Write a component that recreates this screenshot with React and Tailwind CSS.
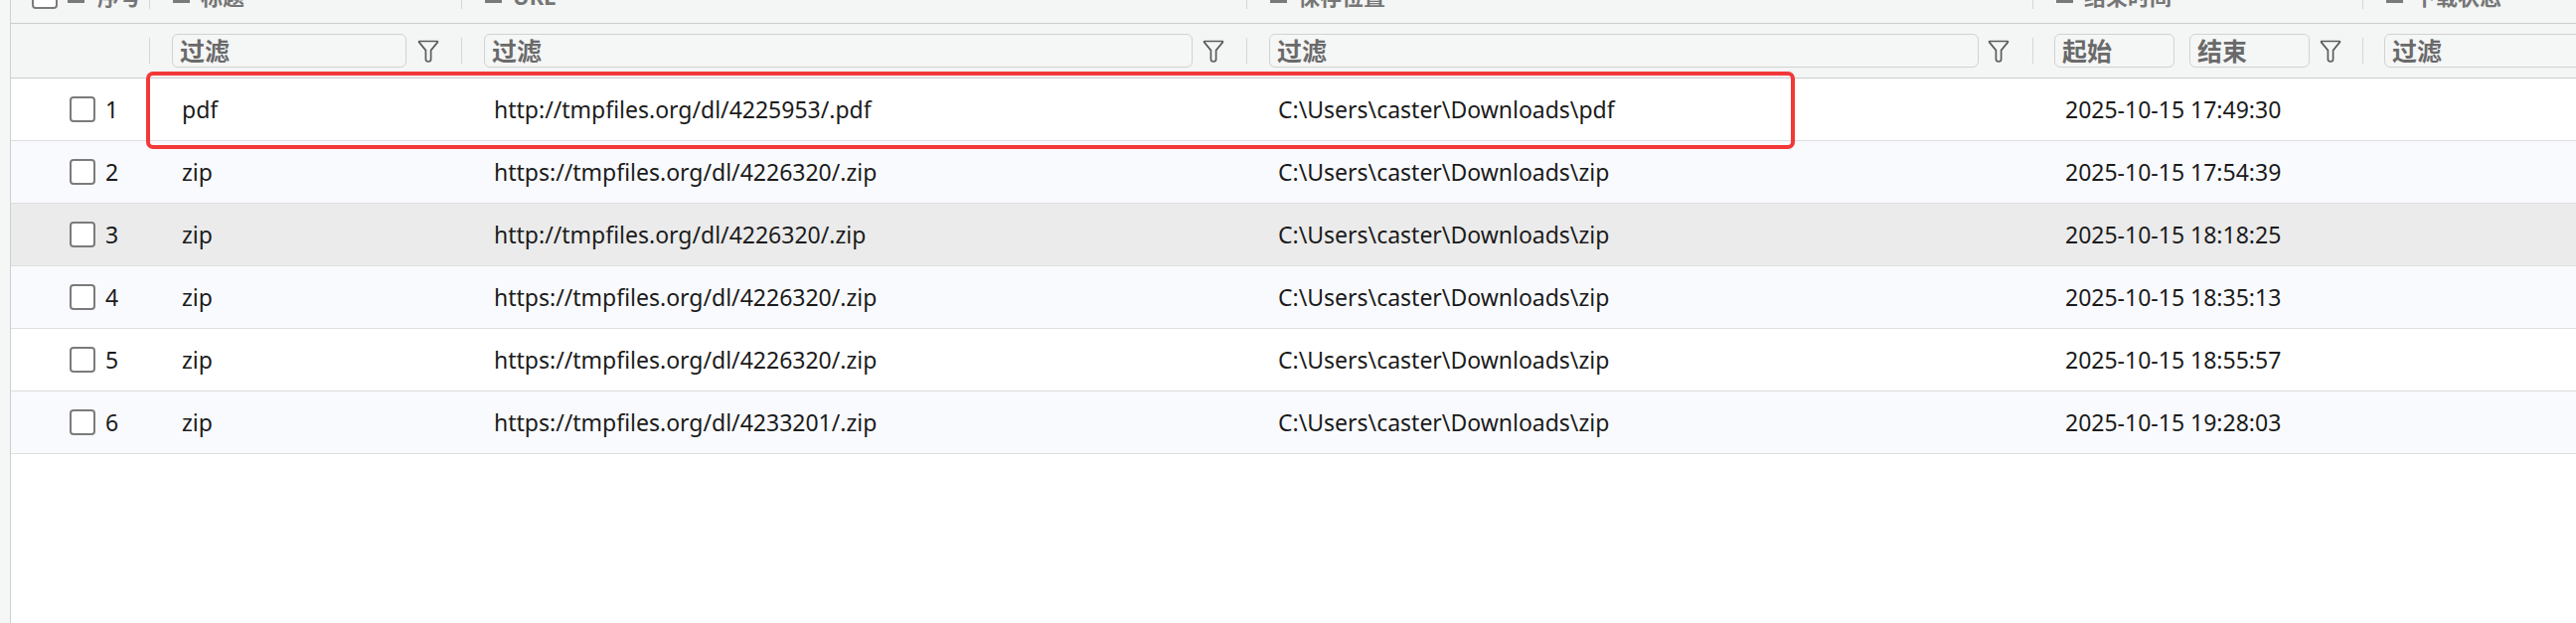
import React from "react";

const rows = [
  { n: 1, t: "pdf", u: "http://tmpfiles.org/dl/4225953/.pdf", p: "C:\\Users\\caster\\Downloads\\pdf", d: "2025-10-15 17:49:30" },
  { n: 2, t: "zip", u: "https://tmpfiles.org/dl/4226320/.zip", p: "C:\\Users\\caster\\Downloads\\zip", d: "2025-10-15 17:54:39" },
  { n: 3, t: "zip", u: "http://tmpfiles.org/dl/4226320/.zip", p: "C:\\Users\\caster\\Downloads\\zip", d: "2025-10-15 18:18:25" },
  { n: 4, t: "zip", u: "https://tmpfiles.org/dl/4226320/.zip", p: "C:\\Users\\caster\\Downloads\\zip", d: "2025-10-15 18:35:13" },
  { n: 5, t: "zip", u: "https://tmpfiles.org/dl/4226320/.zip", p: "C:\\Users\\caster\\Downloads\\zip", d: "2025-10-15 18:55:57" },
  { n: 6, t: "zip", u: "https://tmpfiles.org/dl/4233201/.zip", p: "C:\\Users\\caster\\Downloads\\zip", d: "2025-10-15 19:28:03" },
];

function Funnel() {
  return (
    <svg width="22" height="26" viewBox="0 0 22 26" className="shrink-0">
      <path
        d="M2.2 3.5 H19.8 Q21 3.5 20.2 4.6 L13.6 12.6 V21.6 Q13.6 24 11 24 Q8.4 24 8.4 21.6 V12.6 L1.8 4.6 Q1 3.5 2.2 3.5 Z"
        fill="none"
        stroke="#5c5c5c"
        strokeWidth="1.7"
        strokeLinejoin="round"
      />
    </svg>
  );
}

function ListIcon() {
  return (
    <svg width="17" height="14" viewBox="0 0 17 14" className="shrink-0">
      <rect x="0" y="1" width="4" height="2.5" fill="#7a7a7a" />
      <rect x="6" y="1" width="11" height="2.5" fill="#7a7a7a" />
      <rect x="0" y="6" width="4" height="2.5" fill="#7a7a7a" />
      <rect x="6" y="6" width="11" height="2.5" fill="#7a7a7a" />
      <rect x="0" y="11" width="17" height="3" fill="#7a7a7a" />
    </svg>
  );
}

function Box() {
  return <div className="w-[26px] h-[26px] shrink-0 rounded-[4px] border-2 border-[#7b7b7b] bg-white" />;
}

function Sep() {
  return <div className="w-px h-[26px] bg-[#d6d6d6] shrink-0" />;
}

function FilterInput({ label }) {
  return (
    <div className="flex-1 min-w-0 h-[34px] rounded-[6px] border border-[#d2d2d2] bg-[#f5f6f6] flex items-center pl-[7px] text-[25px] font-bold text-[#6a6a6a] leading-none overflow-hidden">
      {label}
    </div>
  );
}

function HeadLabel({ text }) {
  return (
    <div className="flex items-center gap-[11px] pl-[23px]">
      <ListIcon />
      <span>{text}</span>
    </div>
  );
}

export default function App() {
  return (
    <div className="w-[2592px] h-[627px] overflow-hidden bg-white flex font-['Noto_Sans','Noto_Sans_CJK_SC',sans-serif]">
      <div className="w-[10px] shrink-0 bg-[#f5f6f6] border-r border-[#cfcfcf] box-content" />
      <div className="flex-1 relative flex flex-col">
        {/* header row */}
        <div className="-mt-[31px] h-[55px] flex items-center bg-[#f4f5f5] border-b border-[#cdcdcd] text-[22px] font-bold text-[#767676] shrink-0">
          <div className="w-[139px] shrink-0 flex items-center pl-[21px] gap-[10px]">
            <Box />
            <ListIcon />
            <span className="ml-[3px]">序号</span>
          </div>
          <Sep />
          <div className="w-[313px] shrink-0"><HeadLabel text="标题" /></div>
          <Sep />
          <div className="w-[789px] shrink-0"><HeadLabel text="URL" /></div>
          <Sep />
          <div className="w-[790px] shrink-0"><HeadLabel text="保存位置" /></div>
          <Sep />
          <div className="w-[331px] shrink-0"><HeadLabel text="结束时间" /></div>
          <Sep />
          <div className="flex-1"><HeadLabel text="下载状态" /></div>
        </div>
        {/* filter row */}
        <div className="h-[55px] flex items-center bg-[#f4f5f5] border-b border-[#cdcdcd] shrink-0">
          <div className="w-[139px] shrink-0" />
          <Sep />
          <div className="w-[313px] shrink-0 flex items-center gap-[11px] pl-[22px] pr-[22px]">
            <FilterInput label="过滤" />
            <Funnel />
          </div>
          <Sep />
          <div className="w-[789px] shrink-0 flex items-center gap-[10px] pl-[22px] pr-[22px]">
            <FilterInput label="过滤" />
            <Funnel />
          </div>
          <Sep />
          <div className="w-[790px] shrink-0 flex items-center gap-[9px] pl-[22px] pr-[23px]">
            <FilterInput label="过滤" />
            <Funnel />
          </div>
          <Sep />
          <div className="w-[331px] shrink-0 flex items-center pl-[21px] pr-[21px]">
            <FilterInput label="起始" />
            <div className="w-[15px] shrink-0" />
            <FilterInput label="结束" />
            <div className="w-[10px] shrink-0" />
            <Funnel />
          </div>
          <Sep />
          <div className="flex-1 flex items-center pl-[21px] -mr-[40px]">
            <FilterInput label="过滤" />
          </div>
        </div>
        {/* rows */}
        {rows.map((r, i) => (
          <div
            key={r.n}
            className={
              "h-[63px] shrink-0 flex items-center border-b border-[#dedede] text-[23px] text-[#1b1b1b] " +
              (r.n === 3 ? "bg-[#ebebeb]" : i % 2 === 1 ? "bg-[#f9fafd]" : "bg-white")
            }
          >
            <div className="w-[139px] shrink-0 flex items-center pl-[59px] gap-[10px]">
              <Box />
              <span>{r.n}</span>
            </div>
            <div className="w-[314px] shrink-0 pl-[33px]">{r.t}</div>
            <div className="w-[790px] shrink-0 pl-[33px]">{r.u}</div>
            <div className="w-[791px] shrink-0 pl-[32px]">{r.p}</div>
            <div className="w-[332px] shrink-0 pl-[33px]">{r.d}</div>
            <div className="flex-1" />
          </div>
        ))}
        <div className="flex-1 bg-white" />
        {/* highlight annotation */}
        <div className="absolute left-[136px] top-[72px] w-[1659px] h-[78px] border-[4px] border-[#f23838] rounded-[7px] pointer-events-none" />
      </div>
    </div>
  );
}
